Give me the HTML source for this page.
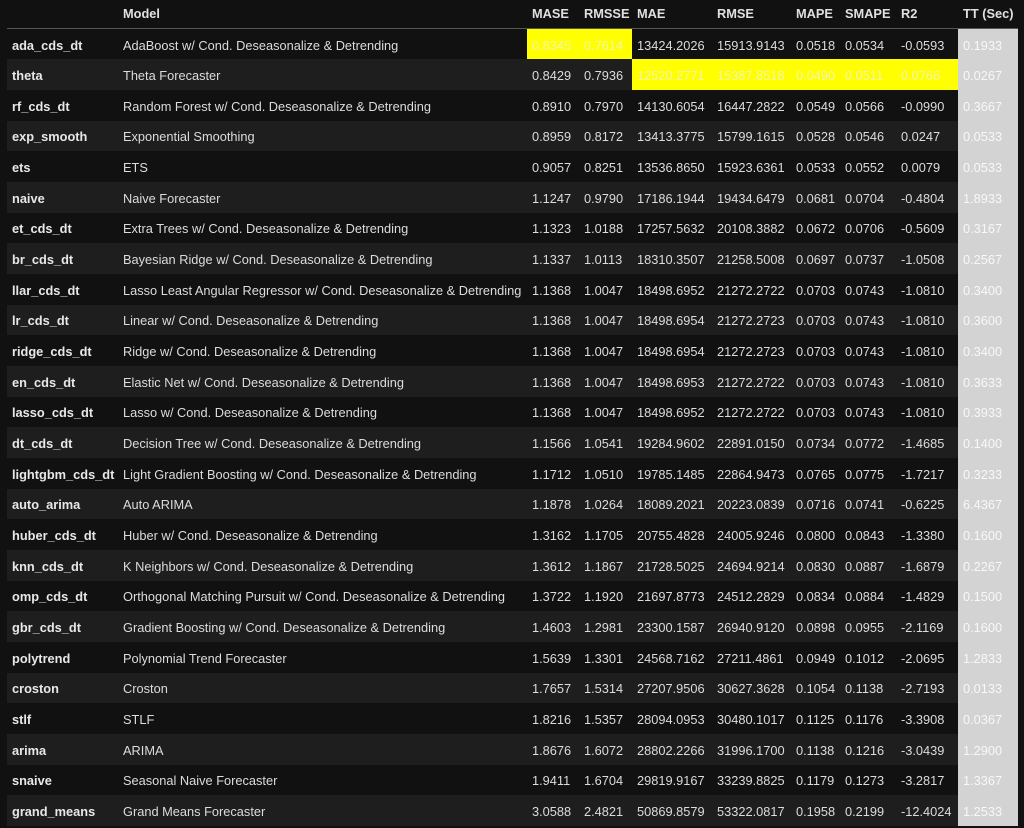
<!DOCTYPE html>
<html><head><meta charset="utf-8"><style>
html,body{margin:0;padding:0;background:#111111;width:1024px;height:828px;overflow:hidden}
table{position:absolute;left:7px;top:0;border-collapse:collapse;table-layout:fixed;width:1011px;font-family:"Liberation Sans",sans-serif;font-size:12.8px;color:#dcdcdc}
th{height:27px;text-align:left;font-weight:bold;padding:0 0 1px 5px;border-bottom:1px solid #555;color:#e0e0e0;white-space:nowrap}
td{height:30.68px;padding:2px 0 0 5px;box-sizing:border-box;white-space:nowrap;overflow:hidden}
tr.r td:first-child{font-weight:bold;color:#e8e8e8}
tbody tr:nth-child(even){background:#1e1e1e}
tbody tr:nth-child(odd){background:#111111}
.y{background:#ffff00;color:#f4f4b0}
td.t{background:#d3d3d3;color:#f8f8f8}
</style></head><body>
<table>
<colgroup><col style="width:111px"><col style="width:409px"><col style="width:52px"><col style="width:53px"><col style="width:80px"><col style="width:79px"><col style="width:49px"><col style="width:56px"><col style="width:62px"><col style="width:60px"></colgroup>
<thead><tr><th></th><th>Model</th><th>MASE</th><th>RMSSE</th><th>MAE</th><th>RMSE</th><th>MAPE</th><th>SMAPE</th><th>R2</th><th>TT (Sec)</th></tr></thead>
<tbody>
<tr class="r"><td>ada_cds_dt</td><td>AdaBoost w/ Cond. Deseasonalize &amp; Detrending</td><td class="y">0.8345</td><td class="y">0.7614</td><td>13424.2026</td><td>15913.9143</td><td>0.0518</td><td>0.0534</td><td>-0.0593</td><td class="t">0.1933</td></tr>
<tr class="r"><td>theta</td><td>Theta Forecaster</td><td>0.8429</td><td>0.7936</td><td class="y">12520.2771</td><td class="y">15387.8518</td><td class="y">0.0490</td><td class="y">0.0511</td><td class="y">0.0766</td><td class="t">0.0267</td></tr>
<tr class="r"><td>rf_cds_dt</td><td>Random Forest w/ Cond. Deseasonalize &amp; Detrending</td><td>0.8910</td><td>0.7970</td><td>14130.6054</td><td>16447.2822</td><td>0.0549</td><td>0.0566</td><td>-0.0990</td><td class="t">0.3667</td></tr>
<tr class="r"><td>exp_smooth</td><td>Exponential Smoothing</td><td>0.8959</td><td>0.8172</td><td>13413.3775</td><td>15799.1615</td><td>0.0528</td><td>0.0546</td><td>0.0247</td><td class="t">0.0533</td></tr>
<tr class="r"><td>ets</td><td>ETS</td><td>0.9057</td><td>0.8251</td><td>13536.8650</td><td>15923.6361</td><td>0.0533</td><td>0.0552</td><td>0.0079</td><td class="t">0.0533</td></tr>
<tr class="r"><td>naive</td><td>Naive Forecaster</td><td>1.1247</td><td>0.9790</td><td>17186.1944</td><td>19434.6479</td><td>0.0681</td><td>0.0704</td><td>-0.4804</td><td class="t">1.8933</td></tr>
<tr class="r"><td>et_cds_dt</td><td>Extra Trees w/ Cond. Deseasonalize &amp; Detrending</td><td>1.1323</td><td>1.0188</td><td>17257.5632</td><td>20108.3882</td><td>0.0672</td><td>0.0706</td><td>-0.5609</td><td class="t">0.3167</td></tr>
<tr class="r"><td>br_cds_dt</td><td>Bayesian Ridge w/ Cond. Deseasonalize &amp; Detrending</td><td>1.1337</td><td>1.0113</td><td>18310.3507</td><td>21258.5008</td><td>0.0697</td><td>0.0737</td><td>-1.0508</td><td class="t">0.2567</td></tr>
<tr class="r"><td>llar_cds_dt</td><td>Lasso Least Angular Regressor w/ Cond. Deseasonalize &amp; Detrending</td><td>1.1368</td><td>1.0047</td><td>18498.6952</td><td>21272.2722</td><td>0.0703</td><td>0.0743</td><td>-1.0810</td><td class="t">0.3400</td></tr>
<tr class="r"><td>lr_cds_dt</td><td>Linear w/ Cond. Deseasonalize &amp; Detrending</td><td>1.1368</td><td>1.0047</td><td>18498.6954</td><td>21272.2723</td><td>0.0703</td><td>0.0743</td><td>-1.0810</td><td class="t">0.3600</td></tr>
<tr class="r"><td>ridge_cds_dt</td><td>Ridge w/ Cond. Deseasonalize &amp; Detrending</td><td>1.1368</td><td>1.0047</td><td>18498.6954</td><td>21272.2723</td><td>0.0703</td><td>0.0743</td><td>-1.0810</td><td class="t">0.3400</td></tr>
<tr class="r"><td>en_cds_dt</td><td>Elastic Net w/ Cond. Deseasonalize &amp; Detrending</td><td>1.1368</td><td>1.0047</td><td>18498.6953</td><td>21272.2722</td><td>0.0703</td><td>0.0743</td><td>-1.0810</td><td class="t">0.3633</td></tr>
<tr class="r"><td>lasso_cds_dt</td><td>Lasso w/ Cond. Deseasonalize &amp; Detrending</td><td>1.1368</td><td>1.0047</td><td>18498.6952</td><td>21272.2722</td><td>0.0703</td><td>0.0743</td><td>-1.0810</td><td class="t">0.3933</td></tr>
<tr class="r"><td>dt_cds_dt</td><td>Decision Tree w/ Cond. Deseasonalize &amp; Detrending</td><td>1.1566</td><td>1.0541</td><td>19284.9602</td><td>22891.0150</td><td>0.0734</td><td>0.0772</td><td>-1.4685</td><td class="t">0.1400</td></tr>
<tr class="r"><td>lightgbm_cds_dt</td><td>Light Gradient Boosting w/ Cond. Deseasonalize &amp; Detrending</td><td>1.1712</td><td>1.0510</td><td>19785.1485</td><td>22864.9473</td><td>0.0765</td><td>0.0775</td><td>-1.7217</td><td class="t">0.3233</td></tr>
<tr class="r"><td>auto_arima</td><td>Auto ARIMA</td><td>1.1878</td><td>1.0264</td><td>18089.2021</td><td>20223.0839</td><td>0.0716</td><td>0.0741</td><td>-0.6225</td><td class="t">6.4367</td></tr>
<tr class="r"><td>huber_cds_dt</td><td>Huber w/ Cond. Deseasonalize &amp; Detrending</td><td>1.3162</td><td>1.1705</td><td>20755.4828</td><td>24005.9246</td><td>0.0800</td><td>0.0843</td><td>-1.3380</td><td class="t">0.1600</td></tr>
<tr class="r"><td>knn_cds_dt</td><td>K Neighbors w/ Cond. Deseasonalize &amp; Detrending</td><td>1.3612</td><td>1.1867</td><td>21728.5025</td><td>24694.9214</td><td>0.0830</td><td>0.0887</td><td>-1.6879</td><td class="t">0.2267</td></tr>
<tr class="r"><td>omp_cds_dt</td><td>Orthogonal Matching Pursuit w/ Cond. Deseasonalize &amp; Detrending</td><td>1.3722</td><td>1.1920</td><td>21697.8773</td><td>24512.2829</td><td>0.0834</td><td>0.0884</td><td>-1.4829</td><td class="t">0.1500</td></tr>
<tr class="r"><td>gbr_cds_dt</td><td>Gradient Boosting w/ Cond. Deseasonalize &amp; Detrending</td><td>1.4603</td><td>1.2981</td><td>23300.1587</td><td>26940.9120</td><td>0.0898</td><td>0.0955</td><td>-2.1169</td><td class="t">0.1600</td></tr>
<tr class="r"><td>polytrend</td><td>Polynomial Trend Forecaster</td><td>1.5639</td><td>1.3301</td><td>24568.7162</td><td>27211.4861</td><td>0.0949</td><td>0.1012</td><td>-2.0695</td><td class="t">1.2833</td></tr>
<tr class="r"><td>croston</td><td>Croston</td><td>1.7657</td><td>1.5314</td><td>27207.9506</td><td>30627.3628</td><td>0.1054</td><td>0.1138</td><td>-2.7193</td><td class="t">0.0133</td></tr>
<tr class="r"><td>stlf</td><td>STLF</td><td>1.8216</td><td>1.5357</td><td>28094.0953</td><td>30480.1017</td><td>0.1125</td><td>0.1176</td><td>-3.3908</td><td class="t">0.0367</td></tr>
<tr class="r"><td>arima</td><td>ARIMA</td><td>1.8676</td><td>1.6072</td><td>28802.2266</td><td>31996.1700</td><td>0.1138</td><td>0.1216</td><td>-3.0439</td><td class="t">1.2900</td></tr>
<tr class="r"><td>snaive</td><td>Seasonal Naive Forecaster</td><td>1.9411</td><td>1.6704</td><td>29819.9167</td><td>33239.8825</td><td>0.1179</td><td>0.1273</td><td>-3.2817</td><td class="t">1.3367</td></tr>
<tr class="r"><td>grand_means</td><td>Grand Means Forecaster</td><td>3.0588</td><td>2.4821</td><td>50869.8579</td><td>53322.0817</td><td>0.1958</td><td>0.2199</td><td>-12.4024</td><td class="t">1.2533</td></tr>
</tbody></table>
</body></html>
